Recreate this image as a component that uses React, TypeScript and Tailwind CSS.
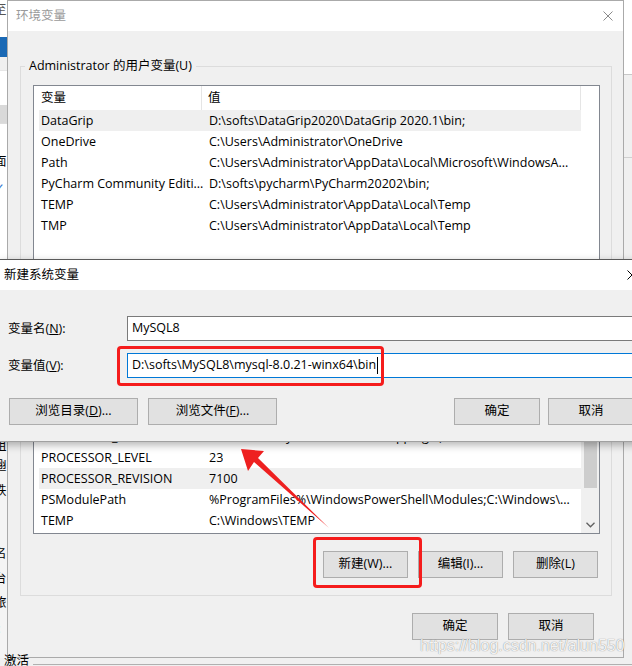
import React from 'react';

type Row = { name: string; value: string; hl?: boolean };

const USER_VARS: Row[] = [
    { name: 'DataGrip', value: 'D:\\softs\\DataGrip2020\\DataGrip 2020.1\\bin;', hl: true },
    { name: 'OneDrive', value: 'C:\\Users\\Administrator\\OneDrive' },
    { name: 'Path', value: 'C:\\Users\\Administrator\\AppData\\Local\\Microsoft\\WindowsA...' },
    { name: 'PyCharm Community Editi...', value: 'D:\\softs\\pycharm\\PyCharm20202\\bin;' },
    { name: 'TEMP', value: 'C:\\Users\\Administrator\\AppData\\Local\\Temp' },
    { name: 'TMP', value: 'C:\\Users\\Administrator\\AppData\\Local\\Temp' },
];

const SYSTEM_VARS: Row[] = [
    { name: 'PATHEXT', value: '.COM;.EXE;.BAT;.CMD;.VBS;.VBE;.JS;.JSE;.WSF;.WSH;.MSC' },
    { name: 'PROCESSOR_ARCHITECTURE', value: 'AMD64' },
    { name: 'PROCESSOR_IDENTIFIER', value: 'AMD64 Family 23 Model 113 Stepping 0, AuthenticAMD' },
    { name: 'PROCESSOR_LEVEL', value: '23' },
    { name: 'PROCESSOR_REVISION', value: '7100', hl: true },
    { name: 'PSModulePath', value: '%ProgramFiles%\\WindowsPowerShell\\Modules;C:\\Windows\\...' },
    { name: 'TEMP', value: 'C:\\Windows\\TEMP' },
    { name: 'TMP', value: 'C:\\Windows\\TEMP' },
];

const Btn = ({ children, className = '' }: { children: React.ReactNode; className?: string }) => (
    <div className={`h-[27px] shrink-0 flex items-center justify-center bg-[#e1e1e1] border border-[#adadad] text-black whitespace-nowrap ${className}`}>
        {children}
    </div>
);

const CloseX = ({ color }: { color: string }) => (
    <svg width="10" height="10" viewBox="0 0 10 10" className="shrink-0">
        <path d="M0.5 0.5 L9.5 9.5 M9.5 0.5 L0.5 9.5" stroke={color} strokeWidth="1" />
    </svg>
);

function ListBox({ rows, className, scroll }: { rows: Row[]; className: string; scroll?: boolean }) {
    return (
        <div className={`border border-[#828790] bg-white flex overflow-hidden ${className}`}>
            <div className="flex-1 min-w-0 overflow-hidden">
                {/* column header */}
                <div className="h-[24px] flex items-center whitespace-nowrap">
                    <div className="w-[168px] h-full pl-[7px] flex items-center border-r border-[#e5e5e5]">变量</div>
                    <div className="flex-1 h-full pl-[6px] flex items-center border-r border-[#e5e5e5]">值</div>
                </div>
                {rows.map((r) => (
                    <div
                        key={r.name + r.value}
                        className={`ml-[5px] h-[21px] pt-[2px] flex items-center whitespace-nowrap ${r.hl ? 'bg-[#efefef]' : ''}`}
                    >
                        <div className="w-[168px] shrink-0 pl-[2px] overflow-hidden">{r.name}</div>
                        <div className="pl-[2px] overflow-hidden">{r.value}</div>
                    </div>
                ))}
            </div>
            {scroll ? (
                <div className="w-[18px] shrink-0 flex flex-col bg-[#f0f0f0]">
                    <div className="h-[17px]" />
                    <div className="h-[111px] ml-[3px] w-[13px] bg-[#cdcdcd]" />
                    <div className="flex-1" />
                    <div className="h-[17px] flex items-center justify-center">
                        <svg width="9" height="6" viewBox="0 0 9 6">
                            <path d="M0.5 0.8 L4.5 4.8 L8.5 0.8" stroke="#606060" strokeWidth="1.3" fill="none" />
                        </svg>
                    </div>
                </div>
            ) : (
                <div className="w-[18px] shrink-0" />
            )}
        </div>
    );
}

function GroupBox({ label, children, className }: { label: string; children: React.ReactNode; className: string }) {
    return (
        <div className={`ml-[12px] mr-[11px] border border-[#dcdcdc] pl-[12px] pr-[11px] pb-[17px] ${className}`}>
            <div className="-mt-[9px] -ml-[8px] w-fit px-[4px] h-[16px] leading-[16px] bg-[#f0f0f0] whitespace-nowrap">{label}</div>
            {children}
        </div>
    );
}

function ListButtons() {
    return (
        <div className="mt-[17px] flex justify-end gap-[10px] pr-[2px]">
            <Btn className="w-[85px]">新建(W)...</Btn>
            <Btn className="w-[85px]">编辑(I)...</Btn>
            <Btn className="w-[85px]">删除(L)</Btn>
        </div>
    );
}

function LeftStrip() {
    const frag = (ch: string, cls: string) => (
        <div className={`h-[16px] leading-[16px] -ml-[6px] whitespace-nowrap ${cls}`}>{ch}</div>
    );
    return (
        <div className="w-[7px] shrink-0 flex flex-col overflow-hidden">
            <div className="h-[37px] bg-white pt-[2px]">{frag('至', 'text-[#555]')}</div>
            <div className="h-[20px] bg-[#1a69b5]" />
            <div className="h-[48px] bg-white border-t border-[#e6e6e6] mt-[13px]" />
            <div className="h-[18px] bg-[#d9d9d9] -mt-[13px]" />
            <div className="h-[136px] bg-white border-t border-[#dddddd] flex flex-col">
                <div className="mt-[30px]">{frag('面', '')}</div>
                <div className="mt-[12px] text-[#2a6fd0]">{frag('✓', '-ml-[5px]')}</div>
            </div>
            <div className="h-[183px]" />
            <div className="flex-1 bg-[#f4f4f4] flex flex-col">
                <div className="mt-[-4px]">{frag('组', '')}</div>
                <div className="mt-[4px]">{frag('翅', '')}</div>
                <div className="mt-[9px]">{frag('跌', '')}</div>
                <div className="mt-[21px]">{frag('/', '-ml-[3px]')}</div>
                <div className="mt-[10px]">{frag('名', '')}</div>
                <div className="mt-[9px]">{frag('台', '')}</div>
                <div className="mt-[8px]">{frag('旅', '')}</div>
                <div className="mt-[10px]">{frag('i:', '-ml-[2px]')}</div>
            </div>
        </div>
    );
}

function RightStrip() {
    return (
        <div className="flex-1 flex flex-col overflow-hidden">
            <div className="h-[75px] bg-white border-b border-[#c8c8c8]" />
            <div className="h-[83px] bg-[#f0f0f0] border-b border-[#d0d0d0]" />
            <div className="flex-1 bg-[#f0f0f0]" />
        </div>
    );
}

function NewVarDialog() {
    return (
        <div className="absolute left-0 top-[259px] w-[645px] h-[183px] flex flex-col bg-[#f0f0f0] border-t border-[#5a5a5a] border-b border-b-[#a0a0a0] shadow-[0_3px_8px_rgba(0,0,0,0.3)]">
            <div className="h-[30px] shrink-0 bg-white flex items-center justify-between pl-[4px] pr-[8px]">
                <span>新建系统变量</span>
                <CloseX color="#000" />
            </div>
            <div className="flex-1 flex flex-col">
                <div className="mt-[26px] h-[25px] flex items-center pr-[10px]">
                    <div className="w-[127px] shrink-0 pl-[8px] pt-[2px] whitespace-nowrap">
                        变量名(<span className="underline">N</span>):
                    </div>
                    <div className="flex-1 h-full border border-[#7a7a7a] bg-white flex items-center pl-[4px]">MySQL8</div>
                </div>
                <div className="mt-[12px] h-[25px] flex items-center pr-[10px]">
                    <div className="w-[127px] shrink-0 pl-[8px] pt-[2px] whitespace-nowrap">
                        变量值(<span className="underline">V</span>):
                    </div>
                    <div className="flex-1 h-full border border-[#0078d7] bg-white flex items-center pl-[4px] whitespace-nowrap">
                        D:\softs\MySQL8\mysql-8.0.21-winx64\bin
                        <span className="inline-block w-[1px] h-[17px] bg-black ml-[1px]" />
                    </div>
                </div>
                <div className="mt-[20px] flex pl-[9px] pr-[11px]">
                    <div className="flex gap-[10px]">
                        <Btn className="w-[129px]">
                            浏览目录(<span className="underline">D</span>)...
                        </Btn>
                        <Btn className="w-[129px]">
                            浏览文件(<span className="underline">F</span>)...
                        </Btn>
                    </div>
                    <div className="flex-1" />
                    <div className="flex gap-[8px]">
                        <Btn className="w-[86px]">确定</Btn>
                        <Btn className="w-[86px]">取消</Btn>
                    </div>
                </div>
            </div>
        </div>
    );
}

export default function App() {
    return (
        <div className="relative w-[632px] h-[666px] overflow-hidden bg-[#f0f0f0] font-['Open_Sans','Noto_Sans_CJK_SC',sans-serif] text-[12.5px] text-black">
            <div className="flex h-[658px]">
                <LeftStrip />

                {/* 环境变量 window */}
                <div className="w-[617px] shrink-0 flex flex-col border border-[#aaaaaa]">
                    <div className="h-[30px] shrink-0 bg-white flex items-center justify-between pl-[8px] pr-[10px]">
                        <span className="text-[#9a9a9a]">环境变量</span>
                        <CloseX color="#8a8a8a" />
                    </div>
                    <div className="flex-1 flex flex-col bg-[#f0f0f0]">
                        <GroupBox label="Administrator 的用户变量(U)" className="mt-[35px]">
                            <ListBox rows={USER_VARS} className="mt-[11px] h-[182px]" />
                            <ListButtons />
                        </GroupBox>
                        <GroupBox label="系统变量(S)" className="mt-[11px]">
                            <ListBox rows={SYSTEM_VARS} className="mt-[11px] h-[175px]" scroll />
                            <ListButtons />
                        </GroupBox>
                        <div className="mt-[17px] flex justify-end gap-[10px] pr-[29px]">
                            <Btn className="w-[86px]">确定</Btn>
                            <Btn className="w-[86px]">取消</Btn>
                        </div>
                    </div>
                </div>

                <RightStrip />
            </div>

            {/* desktop strip under the window */}
            <div className="h-[8px] flex items-start">
                <div className="pl-[4px] leading-[14px] -mt-[4px] whitespace-nowrap">激活</div>
                <div className="flex-1 mt-[6px] ml-[4px] border-t border-[#b0b0b0]" />
            </div>

            <NewVarDialog />

            {/* annotations */}
            <div className="absolute left-[117px] top-[346px] w-[267px] h-[40px] border-[3px] border-[#f51c1c] rounded-[4px]" />
            <div className="absolute left-[313px] top-[537px] w-[109px] h-[51px] border-[3px] border-[#f51c1c] rounded-[4px]" />
            <svg className="absolute left-0 top-0 pointer-events-none" width="632" height="666" viewBox="0 0 632 666">
                <polygon
                    points="241,449 264,451 258,458 329,528 254,462 248,471"
                    fill="#ee2020"
                />
            </svg>

            <div className="absolute left-[420px] top-[637px] font-['Liberation_Sans',Arial,sans-serif] text-[16px] leading-[18px] text-white/90 whitespace-nowrap [text-shadow:0_0_1px_rgba(0,0,0,0.55)]">
                https://blog.csdn.net/alun550
            </div>
        </div>
    );
}
